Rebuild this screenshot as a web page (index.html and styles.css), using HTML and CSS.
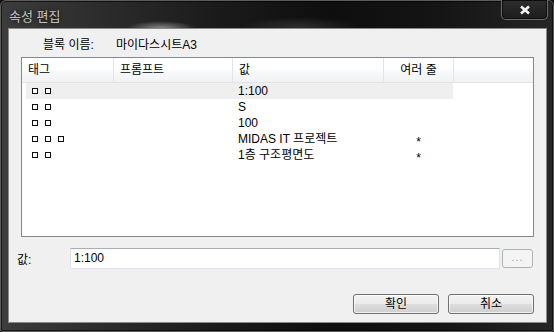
FILE: index.html
```html
<!DOCTYPE html>
<html lang="ko">
<head>
<meta charset="utf-8">
<title>속성 편집</title>
<link rel="stylesheet" href="styles.css">
</head>
<body>
<div class="window">
  <div class="titlebar">
    <span class="title">속성 편집</span>
    <button class="close" aria-label="닫기">
      <svg width="12" height="10" viewBox="0 0 12 10"><path d="M2 1.5 L10 8.5 M10 1.5 L2 8.5" stroke="#f4f4f4" stroke-width="2.6" stroke-linecap="butt"/></svg>
    </button>
  </div>
  <div class="client">
    <div class="name-row">
      <span class="name-label">블록 이름:</span>
      <span class="name-value">마이다스시트A3</span>
    </div>
    <div class="listbox">
      <div class="header">
        <div class="hcell h-tag">태그</div>
        <div class="hcell h-prompt">프롬프트</div>
        <div class="hcell h-value">값</div>
        <div class="hcell h-multi">여러 줄</div>
        <div class="hfill"></div>
      </div>
      <div class="rows">
        <div class="row selected">
          <div class="cell c-tag"><i class="box"></i><i class="box"></i></div>
          <div class="cell c-prompt"></div>
          <div class="cell c-value">1:100</div>
          <div class="cell c-multi"></div>
        </div>
        <div class="row">
          <div class="cell c-tag"><i class="box"></i><i class="box"></i></div>
          <div class="cell c-prompt"></div>
          <div class="cell c-value">S</div>
          <div class="cell c-multi"></div>
        </div>
        <div class="row">
          <div class="cell c-tag"><i class="box"></i><i class="box"></i></div>
          <div class="cell c-prompt"></div>
          <div class="cell c-value">100</div>
          <div class="cell c-multi"></div>
        </div>
        <div class="row">
          <div class="cell c-tag"><i class="box"></i><i class="box"></i><i class="box"></i></div>
          <div class="cell c-prompt"></div>
          <div class="cell c-value">MIDAS IT 프로젝트</div>
          <div class="cell c-multi">*</div>
        </div>
        <div class="row">
          <div class="cell c-tag"><i class="box"></i><i class="box"></i></div>
          <div class="cell c-prompt"></div>
          <div class="cell c-value">1층 구조평면도</div>
          <div class="cell c-multi">*</div>
        </div>
      </div>
    </div>
    <div class="value-row">
      <span class="value-label">값:</span>
      <div class="textbox">1:100</div>
      <button class="browse">...</button>
    </div>
    <div class="button-row">
      <button class="btn">확인</button>
      <button class="btn">취소</button>
    </div>
  </div>
</div>
</body>
</html>
```

FILE: styles.css
```css
* { box-sizing: border-box; }

html, body {
  margin: 0;
  padding: 0;
  background: #111;
}

body {
  font-family: "Liberation Sans Narrow", "Liberation Sans", "Noto Sans CJK KR", sans-serif;
  font-size: 12px;
  color: #000;
}

.window {
  width: 554px;
  height: 332px;
  display: flex;
  flex-direction: column;
  border: 1px solid #5c5c5c;
  border-radius: 6px 6px 2px 2px;
  padding: 0 6px 8px 7px;
  background:
    radial-gradient(ellipse 34px 7px at 160px 27px, rgba(255,255,255,0.45), rgba(255,255,255,0) 100%),
    radial-gradient(ellipse 60px 10px at 300px 26px, rgba(255,255,255,0.12), rgba(255,255,255,0) 100%),
    linear-gradient(to right, #3d3d3d 0%, #2c2c2c 18%, #1a1a1a 40%, #0e0e0e 60%, #151515 80%, #262626 100%);
  box-shadow: inset 0 0 0 1px rgba(0,0,0,0.6);
}

.titlebar {
  height: 27px;
  flex: none;
  display: flex;
  justify-content: space-between;
  align-items: flex-start;
}

.title {
  font-family: "Noto Sans CJK KR", sans-serif;
  font-size: 13px;
  line-height: 14px;
  margin-top: 8px;
  margin-left: 1px;
  color: #c2c2c2;
  text-shadow: 0 0 5px rgba(0,0,0,0.9);
}

.close {
  width: 47px;
  height: 20px;
  margin-top: -1px;
  margin-right: -1px;
  padding: 0;
  border: 1px solid #6c6c6c;
  border-top: none;
  border-radius: 0 0 5px 5px;
  background: linear-gradient(#2e2e2e, #1c1c1c);
  box-shadow: inset 0 0 0 1px #0c0c0c;
  display: flex;
  align-items: center;
  justify-content: center;
}

.close svg { display: block; margin-top: 1px; }

.client {
  flex: 1;
  display: flex;
  flex-direction: column;
  background: #f0f0f0;
  border: 1px solid #8a8a8a;
}

.name-row {
  height: 28px;
  flex: none;
  display: flex;
  padding: 10px 0 0 34px;
  line-height: 12px;
}

.name-label { width: 73px; }

.listbox {
  height: 180px;
  flex: none;
  margin: 0 12px;
  border: 1px solid #828790;
  background: #fff;
}

.header {
  height: 25px;
  display: flex;
  border-bottom: 1px solid #e2e3e5;
  background: linear-gradient(#ffffff 0%, #ffffff 45%, #f7f8f9 60%, #f1f2f4 100%);
}

.hcell {
  height: 24px;
  line-height: 24px;
  padding-left: 6px;
  border-right: 1px solid #e3e4e6;
  white-space: nowrap;
}

.h-tag { width: 92px; }
.h-prompt { width: 119px; }
.h-value { width: 151px; }
.h-multi { width: 70px; padding-left: 0; text-align: center; }
.hfill { flex: 1; }

.rows { padding-left: 4px; }

.row {
  width: 427px;
  height: 16px;
  display: flex;
  line-height: 16px;
}

.row.selected { background: #efefef; }

.cell { white-space: nowrap; }

.c-tag {
  width: 88px;
  padding-left: 6px;
  display: flex;
  align-items: center;
  gap: 7px;
}
.c-prompt { width: 119px; }
.c-value { width: 151px; padding-left: 5px; }
.c-multi { width: 69px; text-align: center; padding-top: 3px; }

.box {
  display: block;
  width: 6px;
  height: 6px;
  border: 1px solid #111;
  background: #fff;
}

.value-row {
  margin-top: 11px;
  height: 21px;
  flex: none;
  display: flex;
  align-items: center;
  padding-left: 8px;
}

.value-label { width: 53px; }

.textbox {
  width: 430px;
  height: 21px;
  padding-left: 3px;
  line-height: 19px;
  background: #fff;
  border: 1px solid #e2e3ea;
  border-top-color: #abadb3;
}

.browse {
  width: 31px;
  height: 19px;
  margin-left: 2px;
  padding: 0 0 4px;
  font: inherit;
  font-size: 11px;
  line-height: 14px;
  color: #a0a0a0;
  letter-spacing: 1px;
  border: 1px solid #adb2b5;
  border-radius: 3px;
  background: #f4f4f4;
}

.button-row {
  margin-top: 25px;
  height: 20px;
  flex: none;
  display: flex;
  justify-content: flex-end;
  gap: 9px;
  padding-right: 12px;
}

.btn {
  width: 86px;
  height: 20px;
  padding: 0;
  font: inherit;
  line-height: 16px;
  color: #000;
  border: 1px solid #707070;
  border-radius: 3px;
  background: linear-gradient(#f2f2f2 0%, #ebebeb 50%, #dddddd 50%, #cfcfcf 100%);
  box-shadow: inset 0 0 0 1px rgba(255,255,255,0.7);
}
```
